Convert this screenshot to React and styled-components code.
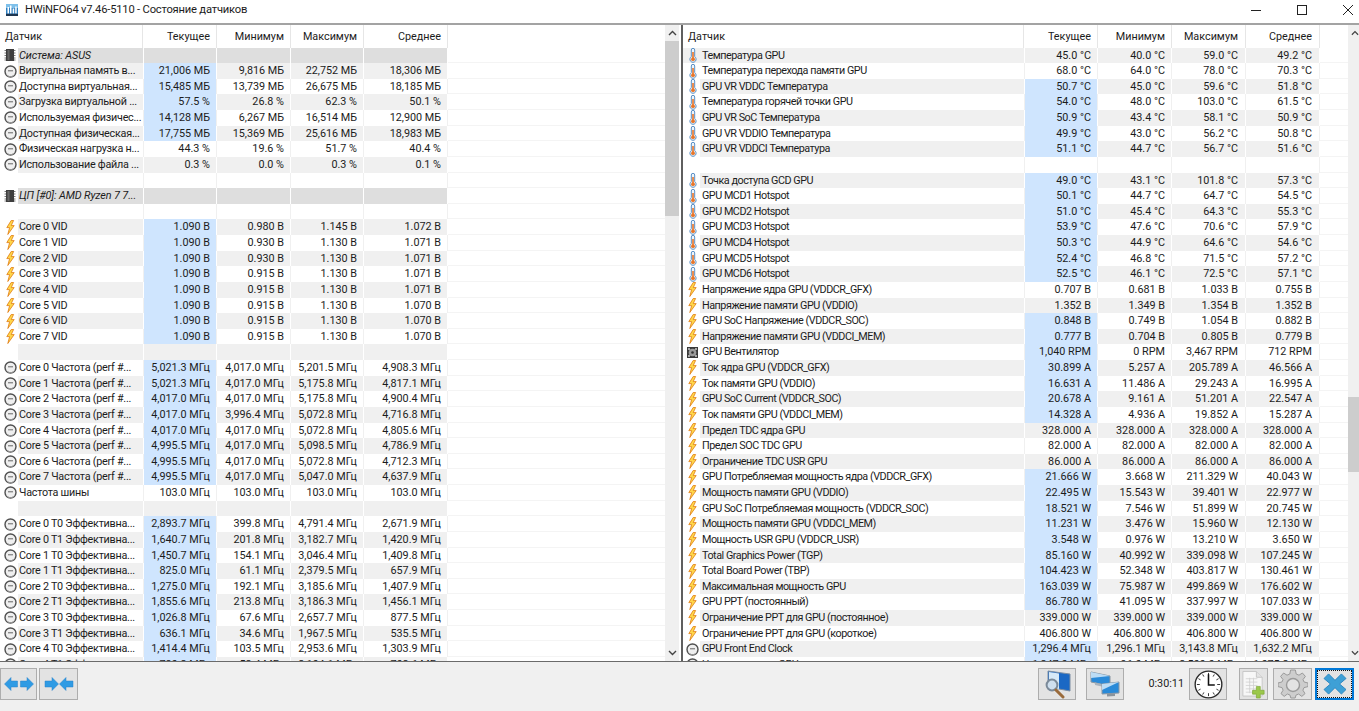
import React from 'react';
import styled, { createGlobalStyle } from 'styled-components';

const GlobalStyle = createGlobalStyle`
  html, body { margin: 0; padding: 0; background: #fff; overflow: hidden; }
  body { font-family: Roboto, "Liberation Sans", sans-serif; font-size: 10.8px; color: #1c1c1c; }
`;

const Window = styled.div`
  width: 1359px;
  height: 711px;
  display: flex;
  flex-direction: column;
  overflow: hidden;
`;

const TitleBar = styled.div`
  height: 19px;
  flex: none;
  display: flex;
  align-items: center;
  padding: 0 0 4px 6px;
  margin-right: -12px;
  font-size: 11.2px;
  letter-spacing: -0.2px;
  border-bottom: 2px solid #a3a3a3;
`;

const TitleText = styled.span`
  flex: 1;
  white-space: nowrap;
  margin-left: 7px;
`;

const WinButton = styled.div`
  width: 46px;
  height: 19px;
  display: flex;
  align-items: center;
  justify-content: center;
`;

const Panes = styled.div`
  flex: 1;
  min-height: 0;
  display: flex;
  border-bottom: 1px solid #6b6b6b;
`;

const Pane = styled.div`
  display: flex;
  min-width: 0;
  overflow: hidden;
  width: ${p => p.$width}px;
`;

const Splitter = styled.div`
  width: 2px;
  margin-left: 2px;
  flex: none;
  background: #5f5f5f;
`;

const Table = styled.div`
  flex: 1;
  min-width: 0;
  overflow: hidden;
`;

const Row = styled.div`
  display: flex;
  height: ${p => (p.$header ? '22.6px' : '15.63px')};
  align-items: stretch;
  white-space: nowrap;
  line-height: ${p => (p.$header ? '23px' : '16.4px')};
`;

const IconSlot = styled.div`
  flex: none;
  width: ${p => p.$w}px;
  box-sizing: border-box;
  padding-left: 2px;
  display: flex;
  align-items: center;
  justify-content: center;
  background: ${p => (p.$bg ? p.$bg : '#fff')};
`;

const rowBg = p => (p.$section ? '#dedede' : p.$odd ? '#f0f0f0' : '#fff');

const NameCell = styled.div`
  flex: none;
  width: ${p => p.$w}px;
  background: ${rowBg};
  overflow: hidden;
  padding-left: ${p => p.$indent}px;
  box-sizing: border-box;
  font-style: ${p => (p.$section ? 'italic' : 'normal')};
  letter-spacing: ${p => (p.$section ? '-0.1px' : `${p.$tight}px`)};
  border-right: 1px solid ${p => (p.$odd || p.$section ? '#fff' : '#f0f0f0')};
`;

const ValueCell = styled.div`
  flex: none;
  width: ${p => p.$w}px;
  box-sizing: border-box;
  text-align: right;
  padding-right: ${p => p.$pad}px;
  background: ${p => (p.$hot ? '#cfe5fe' : rowBg(p))};
  border-right: 1px solid ${p => (p.$odd || p.$section ? '#fff' : '#f0f0f0')};
`;

const HeaderCell = styled.div`
  flex: none;
  width: ${p => p.$w}px;
  box-sizing: border-box;
  text-align: ${p => (p.$left ? 'left' : 'right')};
  padding: ${p => (p.$left ? '0 0 0 5px' : `0 ${p.$pad}px 0 0`)};
  border-right: 1px solid #e6e6e6;
`;

const Filler = styled.div`
  flex: 1;
  border-bottom: 1px solid ${p => (p.$clean ? 'transparent' : '#f4f4f4')};
`;

const Scrollbar = styled.div`
  flex: none;
  width: ${p => p.$w}px;
  background: #f0f0f0;
  display: flex;
  flex-direction: column;
  align-items: stretch;
`;

const ScrollArrow = styled.div`
  height: 16px;
  flex: none;
  display: flex;
  align-items: center;
  justify-content: center;
  padding-left: ${p => p.$shift || 0}px;
`;

const ScrollSpace = styled.div`
  flex: 1;
  display: flex;
  flex-direction: column;
`;

const ScrollGap = styled.div`
  height: ${p => p.$h}px;
  flex: none;
`;

const ScrollThumb = styled.div`
  height: ${p => p.$h}px;
  flex: none;
  background: #cdcdcd;
`;

const BottomBar = styled.div`
  height: 49px;
  flex: none;
  background: #f0f0f0;
  display: flex;
  padding: 6px 5px 0 0;
  box-sizing: border-box;
  align-items: flex-start;
`;

const ToolButton = styled.div`
  width: ${p => p.$w}px;
  height: 32px;
  margin-left: ${p => p.$ml || 0}px;
  flex: none;
  box-sizing: border-box;
  background: #e3e3e3;
  border: ${p => (p.$active ? '2px solid #0078d7' : '1px solid #adadad')};
  display: flex;
  align-items: center;
  justify-content: center;
  position: relative;
`;

const FocusRing = styled.div`
  position: absolute;
  inset: 0;
  border: 1px dotted #111;
`;

const Spacer = styled.div`
  flex: 1;
`;

const Timer = styled.div`
  margin-left: 24px;
  margin-right: 5px;
  height: 32px;
  line-height: 32px;
  flex: none;
`;

const AppIcon = () => (
  <svg width="12" height="12" viewBox="0 0 12 12">
    <rect width="12" height="12" fill="#2f7fc0" />
    <rect width="12" height="4" fill="#7fc0ea" />
    <rect x="1.5" y="3" width="1.5" height="6.5" fill="#fff" />
    <rect x="4" y="1.5" width="1.5" height="8" fill="#fff" />
    <rect x="6.7" y="4.5" width="1.5" height="5" fill="#fff" />
    <rect x="9.2" y="2.5" width="1.5" height="7" fill="#fff" />
    <rect y="9.8" width="12" height="2.2" fill="#1d3550" />
  </svg>
);

const GaugeIcon = () => (
  <svg width="13" height="13" viewBox="0 0 13 13">
    <circle cx="6.5" cy="6.5" r="5.5" fill="#efefef" stroke="#4f4f4f" strokeWidth="1.4" />
    <path d="M4 5.8H9" stroke="#666" strokeWidth="1" />
    <path d="M2.2 9.2a5 5 0 0 0 8.6 0" stroke="#a3a3a3" strokeWidth="1" fill="none" />
  </svg>
);

const ChipIcon = () => (
  <svg width="12" height="14" viewBox="0 0 12 14">
    <rect x="2" y="1" width="8" height="12" fill="#3e3e3e" />
    <path d="M0.5 2.5H2M0.5 5H2M0.5 7.5H2M0.5 10H2M0.5 12H2M10 2.5h1.5M10 5h1.5M10 7.5h1.5M10 10h1.5M10 12h1.5" stroke="#777" strokeWidth="1" />
    <rect x="3.5" y="2" width="2" height="10" fill="#666" />
  </svg>
);

const BoltIcon = () => (
  <svg width="9" height="15" viewBox="0 0 9 15">
    <path d="M5.2 0.5L0.8 7.6H3.6L1.8 14.5L8.2 5.6H5.2L7.6 0.5Z" fill="#ffd84a" stroke="#e07a10" strokeWidth="0.8" strokeLinejoin="round" />
  </svg>
);

const ThermoIcon = () => (
  <svg width="8" height="15" viewBox="0 0 8 15">
    <path d="M2.3 2a1.7 1.7 0 0 1 3.4 0V8.6a3.1 3.1 0 1 1-3.4 0Z" fill="#eef5fb" stroke="#5a8fc4" strokeWidth="1" />
    <rect x="3.2" y="4" width="1.6" height="6" fill="#e8762a" />
    <circle cx="4" cy="11.2" r="1.9" fill="#e8762a" />
  </svg>
);

const FanIcon = () => (
  <svg width="11" height="11" viewBox="0 0 11 11">
    <rect width="11" height="11" fill="#3a3a3a" />
    <circle cx="5.5" cy="5.5" r="3.8" fill="#9b9b9b" />
    <circle cx="2" cy="2" r="1" fill="#ccc" />
    <circle cx="9" cy="2" r="1" fill="#ccc" />
    <circle cx="2" cy="9" r="1" fill="#ccc" />
    <circle cx="9" cy="9" r="1" fill="#ccc" />
    <circle cx="5.5" cy="5.5" r="1.3" fill="#333" />
  </svg>
);

const ICONS = { g: GaugeIcon, c: ChipIcon, b: BoltIcon, t: ThermoIcon, f: FanIcon };

const ArrowPair = ({ inward }) => (
  <svg width="30" height="14" viewBox="0 0 30 14">
    {inward ? (
      <g fill="#2f9be4" stroke="#2a83c8" strokeWidth="0.5">
        <path d="M1 4H8V0.5L14.5 7L8 13.5V10H1Z" />
        <path d="M29 4H22V0.5L15.5 7L22 13.5V10H29Z" />
      </g>
    ) : (
      <g fill="#2f9be4" stroke="#2a83c8" strokeWidth="0.5">
        <path d="M13.5 4H7V0.5L0.5 7L7 13.5V10H13.5Z" />
        <path d="M16.5 4H23V0.5L29.5 7L23 13.5V10H16.5Z" />
      </g>
    )}
  </svg>
);

const MonitorSearchIcon = () => (
  <svg width="28" height="29" viewBox="0 0 28 29">
    <path d="M5 1L27 4V21L5 17Z" fill="#1b68c4" stroke="#7c8ea3" />
    <path d="M6 2L16 3.4V19L6 16.4Z" fill="#d6e9f8" />
    <circle cx="9" cy="15" r="5.4" fill="#cfdfee" stroke="#7b8a99" strokeWidth="2" />
    <path d="M13 20L20 27" stroke="#9a6b3c" strokeWidth="3" strokeLinecap="round" />
  </svg>
);

const MonitorsIcon = () => (
  <svg width="30" height="26" viewBox="0 0 30 26">
    <path d="M1 1L20 5V15L1 11Z" fill="#2a8ad8" stroke="#8b97a3" />
    <path d="M1 1L20 5L1 7Z" fill="#bcdcf5" />
    <path d="M5 11.5L14 13.5V16L5 14Z" fill="#a9b3bd" />
    <path d="M12 13L29 11V22L12 23Z" fill="#2a8ad8" stroke="#8b97a3" />
    <path d="M12 13L29 11L12 19Z" fill="#bcdcf5" />
    <path d="M17 23L25 22.5V25L17 25.5Z" fill="#8b949c" />
  </svg>
);

const ClockIcon = () => (
  <svg width="29" height="29" viewBox="0 0 30 30">
    <circle cx="15" cy="15" r="13.8" fill="#fff" stroke="#2a2a2a" strokeWidth="1.4" />
    <path d="M15 3V6M15 24V27M3 15H6M24 15H27M9 4.6L10.2 6.8M21 4.6L19.8 6.8M9 25.4L10.2 23.2M21 25.4L19.8 23.2M4.6 9L6.8 10.2M4.6 21L6.8 19.8M25.4 9L23.2 10.2M25.4 21L23.2 19.8" stroke="#333" strokeWidth="1" />
    <path d="M15 4.5V15.6H21.5" stroke="#111" strokeWidth="1.6" fill="none" />
  </svg>
);

const DocPlusIcon = () => (
  <svg width="27" height="29" viewBox="0 0 28 30">
    <path d="M3 1.5H17L23 7.5V27H3Z" fill="#f7f7f7" stroke="#c7c7c7" />
    <path d="M17 1.5V7.5H23" fill="#e3e3e3" stroke="#c7c7c7" />
    <path d="M6 9H18M6 12.5H18M6 16H18M6 19.5H18M6 23H14M10 8V24M14 8V24" stroke="#cfcfcf" strokeWidth="0.8" />
    <path d="M17 17H21V21H25V25H21V29H17V25H13V21H17Z" fill="#9bc84b" stroke="#7da535" strokeWidth="0.7" />
  </svg>
);

const GearIcon = () => (
  <svg width="30" height="30" viewBox="0 0 30 30">
    <path
      d="M12.6 2H17.4L18.2 6L21 7.2L24.4 5L27.4 8.4L25 11.6L26.1 14L30 15V18.6L26 19.6L24.9 22.2L27 25.6L23.8 28.4L20.6 26L18 27.1L17.2 30H12.8L12 27.1L9.4 26L6.2 28.4L3 25.6L5.1 22.2L4 19.6L0 18.6V15L3.9 14L5 11.6L2.6 8.4L5.6 5L9 7.2L11.8 6Z"
      fill="#cdcdcd"
      stroke="#9a9a9a"
      transform="translate(0 -1)"
    />
    <circle cx="15" cy="16" r="6.5" fill="#e3e3e3" stroke="#9a9a9a" strokeWidth="1.4" />
  </svg>
);

const CloseIcon = () => (
  <svg width="24" height="22" viewBox="0 0 26 24">
    <path d="M6 1L13 8L20 1L25 6L18 12L25 18L20 23L13 16L6 23L1 18L8 12L1 6Z" fill="#3ea0d6" stroke="#2a86bf" strokeLinejoin="round" />
  </svg>
);

// [icon, name, current, min, max, avg, hot]
const s = name => ['c', name];
const leftRows = [
  s('Система: ASUS'),
  ['g', 'Виртуальная память в...', '21,006 МБ', '9,816 МБ', '22,752 МБ', '18,306 МБ', 1],
  ['g', 'Доступна виртуальная...', '15,485 МБ', '13,739 МБ', '26,675 МБ', '18,185 МБ', 1],
  ['g', 'Загрузка виртуальной ...', '57.5 %', '26.8 %', '62.3 %', '50.1 %', 1],
  ['g', 'Используемая физичес...', '14,128 МБ', '6,267 МБ', '16,514 МБ', '12,900 МБ', 1],
  ['g', 'Доступная физическая...', '17,755 МБ', '15,369 МБ', '25,616 МБ', '18,983 МБ', 1],
  ['g', 'Физическая нагрузка н...', '44.3 %', '19.6 %', '51.7 %', '40.4 %', 0],
  ['g', 'Использование файла ...', '0.3 %', '0.0 %', '0.3 %', '0.1 %', 0],
  [],
  s('ЦП [#0]: AMD Ryzen 7 7...'),
  [],
  ['b', 'Core 0 VID', '1.090 В', '0.980 В', '1.145 В', '1.072 В', 1],
  ['b', 'Core 1 VID', '1.090 В', '0.930 В', '1.130 В', '1.071 В', 1],
  ['b', 'Core 2 VID', '1.090 В', '0.930 В', '1.130 В', '1.071 В', 1],
  ['b', 'Core 3 VID', '1.090 В', '0.915 В', '1.130 В', '1.071 В', 1],
  ['b', 'Core 4 VID', '1.090 В', '0.915 В', '1.130 В', '1.071 В', 1],
  ['b', 'Core 5 VID', '1.090 В', '0.915 В', '1.130 В', '1.070 В', 1],
  ['b', 'Core 6 VID', '1.090 В', '0.915 В', '1.130 В', '1.070 В', 1],
  ['b', 'Core 7 VID', '1.090 В', '0.915 В', '1.130 В', '1.070 В', 1],
  [],
  ['g', 'Core 0 Частота (perf #...', '5,021.3 МГц', '4,017.0 МГц', '5,201.5 МГц', '4,908.3 МГц', 1],
  ['g', 'Core 1 Частота (perf #...', '5,021.3 МГц', '4,017.0 МГц', '5,175.8 МГц', '4,817.1 МГц', 1],
  ['g', 'Core 2 Частота (perf #...', '4,017.0 МГц', '4,017.0 МГц', '5,175.8 МГц', '4,900.4 МГц', 1],
  ['g', 'Core 3 Частота (perf #...', '4,017.0 МГц', '3,996.4 МГц', '5,072.8 МГц', '4,716.8 МГц', 1],
  ['g', 'Core 4 Частота (perf #...', '4,017.0 МГц', '4,017.0 МГц', '5,072.8 МГц', '4,805.6 МГц', 1],
  ['g', 'Core 5 Частота (perf #...', '4,995.5 МГц', '4,017.0 МГц', '5,098.5 МГц', '4,786.9 МГц', 1],
  ['g', 'Core 6 Частота (perf #...', '4,995.5 МГц', '4,017.0 МГц', '5,072.8 МГц', '4,712.3 МГц', 1],
  ['g', 'Core 7 Частота (perf #...', '4,995.5 МГц', '4,017.0 МГц', '5,047.0 МГц', '4,637.9 МГц', 1],
  ['g', 'Частота шины', '103.0 МГц', '103.0 МГц', '103.0 МГц', '103.0 МГц', 0],
  [],
  ['g', 'Core 0 T0 Эффективна...', '2,893.7 МГц', '399.8 МГц', '4,791.4 МГц', '2,671.9 МГц', 1],
  ['g', 'Core 0 T1 Эффективна...', '1,640.7 МГц', '201.8 МГц', '3,182.7 МГц', '1,420.9 МГц', 1],
  ['g', 'Core 1 T0 Эффективна...', '1,450.7 МГц', '154.1 МГц', '3,046.4 МГц', '1,409.8 МГц', 1],
  ['g', 'Core 1 T1 Эффективна...', '825.0 МГц', '61.1 МГц', '2,379.5 МГц', '657.9 МГц', 1],
  ['g', 'Core 2 T0 Эффективна...', '1,275.0 МГц', '192.1 МГц', '3,185.6 МГц', '1,407.9 МГц', 1],
  ['g', 'Core 2 T1 Эффективна...', '1,855.6 МГц', '213.8 МГц', '3,186.3 МГц', '1,456.1 МГц', 1],
  ['g', 'Core 3 T0 Эффективна...', '1,026.8 МГц', '67.6 МГц', '2,657.7 МГц', '877.5 МГц', 1],
  ['g', 'Core 3 T1 Эффективна...', '636.1 МГц', '34.6 МГц', '1,967.5 МГц', '535.5 МГц', 1],
  ['g', 'Core 4 T0 Эффективна...', '1,414.4 МГц', '103.5 МГц', '2,953.6 МГц', '1,303.9 МГц', 1],
  ['g', 'Core 4 T1 Эффективна...', '780.2 МГц', '52.4 МГц', '2,104.1 МГц', '702.6 МГц', 1],
];

const rightRows = [
  ['t', 'Температура GPU', '45.0 °C', '40.0 °C', '59.0 °C', '49.2 °C', 0],
  ['t', 'Температура перехода памяти GPU', '68.0 °C', '64.0 °C', '78.0 °C', '70.3 °C', 0],
  ['t', 'GPU VR VDDC Температура', '50.7 °C', '45.0 °C', '59.6 °C', '51.8 °C', 1],
  ['t', 'Температура горячей точки GPU', '54.0 °C', '48.0 °C', '103.0 °C', '61.5 °C', 1],
  ['t', 'GPU VR SoC Температура', '50.9 °C', '43.4 °C', '58.1 °C', '50.9 °C', 1],
  ['t', 'GPU VR VDDIO Температура', '49.9 °C', '43.0 °C', '56.2 °C', '50.8 °C', 1],
  ['t', 'GPU VR VDDCI Температура', '51.1 °C', '44.7 °C', '56.7 °C', '51.6 °C', 1],
  [],
  ['t', 'Точка доступа GCD GPU', '49.0 °C', '43.1 °C', '101.8 °C', '57.3 °C', 1],
  ['t', 'GPU MCD1 Hotspot', '50.1 °C', '44.7 °C', '64.7 °C', '54.5 °C', 1],
  ['t', 'GPU MCD2 Hotspot', '51.0 °C', '45.4 °C', '64.3 °C', '55.3 °C', 1],
  ['t', 'GPU MCD3 Hotspot', '53.9 °C', '47.6 °C', '70.6 °C', '57.9 °C', 1],
  ['t', 'GPU MCD4 Hotspot', '50.3 °C', '44.9 °C', '64.6 °C', '54.6 °C', 1],
  ['t', 'GPU MCD5 Hotspot', '52.4 °C', '46.8 °C', '71.5 °C', '57.2 °C', 1],
  ['t', 'GPU MCD6 Hotspot', '52.5 °C', '46.1 °C', '72.5 °C', '57.1 °C', 1],
  ['b', 'Напряжение ядра GPU (VDDCR_GFX)', '0.707 В', '0.681 В', '1.033 В', '0.755 В', 0],
  ['b', 'Напряжение памяти GPU (VDDIO)', '1.352 В', '1.349 В', '1.354 В', '1.352 В', 0],
  ['b', 'GPU SoC Напряжение (VDDCR_SOC)', '0.848 В', '0.749 В', '1.054 В', '0.882 В', 1],
  ['b', 'Напряжение памяти GPU (VDDCI_MEM)', '0.777 В', '0.704 В', '0.805 В', '0.779 В', 1],
  ['f', 'GPU Вентилятор', '1,040 RPM', '0 RPM', '3,467 RPM', '712 RPM', 1],
  ['b', 'Ток ядра GPU (VDDCR_GFX)', '30.899 A', '5.257 A', '205.789 A', '46.566 A', 1],
  ['b', 'Ток памяти GPU (VDDIO)', '16.631 A', '11.486 A', '29.243 A', '16.995 A', 1],
  ['b', 'GPU SoC Current (VDDCR_SOC)', '20.678 A', '9.161 A', '51.201 A', '22.547 A', 1],
  ['b', 'Ток памяти GPU (VDDCI_MEM)', '14.328 A', '4.936 A', '19.852 A', '15.287 A', 1],
  ['b', 'Предел TDC ядра GPU', '328.000 A', '328.000 A', '328.000 A', '328.000 A', 0],
  ['b', 'Предел SOC TDC GPU', '82.000 A', '82.000 A', '82.000 A', '82.000 A', 0],
  ['b', 'Ограничение TDC USR GPU', '86.000 A', '86.000 A', '86.000 A', '86.000 A', 0],
  ['b', 'GPU Потребляемая мощность ядра (VDDCR_GFX)', '21.666 W', '3.668 W', '211.329 W', '40.043 W', 1],
  ['b', 'Мощность памяти GPU (VDDIO)', '22.495 W', '15.543 W', '39.401 W', '22.977 W', 1],
  ['b', 'GPU SoC Потребляемая мощность (VDDCR_SOC)', '18.521 W', '7.546 W', '51.899 W', '20.745 W', 1],
  ['b', 'Мощность памяти GPU (VDDCI_MEM)', '11.231 W', '3.476 W', '15.960 W', '12.130 W', 1],
  ['b', 'Мощность USR GPU (VDDCR_USR)', '3.548 W', '0.976 W', '13.210 W', '3.650 W', 1],
  ['b', 'Total Graphics Power (TGP)', '85.160 W', '40.992 W', '339.098 W', '107.245 W', 1],
  ['b', 'Total Board Power (TBP)', '104.423 W', '52.348 W', '403.817 W', '130.461 W', 1],
  ['b', 'Максимальная мощность GPU', '163.039 W', '75.987 W', '499.869 W', '176.602 W', 1],
  ['b', 'GPU PPT (постоянный)', '86.780 W', '41.095 W', '337.997 W', '107.033 W', 1],
  ['b', 'Ограничение PPT для GPU (постоянное)', '339.000 W', '339.000 W', '339.000 W', '339.000 W', 0],
  ['b', 'Ограничение PPT для GPU (короткое)', '406.800 W', '406.800 W', '406.800 W', '406.800 W', 0],
  ['g', 'GPU Front End Clock', '1,296.4 МГц', '1,296.1 МГц', '3,143.8 МГц', '1,632.2 МГц', 1],
  ['g', 'Частота памяти GPU', '1,247.0 МГц', '96.0 МГц', '2,500.0 МГц', '1,075.2 МГц', 1],
];

const SensorTable = ({ rows, cols, oddStart, slot, pad, firstFull, indent, tight }) => (
  <Table>
    <Row $header>
      <HeaderCell $left $w={cols[0] - 1}>Датчик</HeaderCell>
      {['Текущее', 'Минимум', 'Максимум', 'Среднее'].map((h, i) => (
        <HeaderCell key={h} $w={cols[i + 1] + (i === 0 ? 1 : 0)} $pad={pad[i]}>{h}</HeaderCell>
      ))}
      <Filler $clean />
    </Row>
    {rows.map(([icon, name, cur, min, max, avg, hot], idx) => {
      const Icon = ICONS[icon];
      const section = icon === 'c';
      const odd = (idx + oddStart) % 2 === 1;
      return (
        <Row key={idx}>
          <IconSlot $w={slot} $bg={firstFull && idx === 0 ? '#f0f0f0' : null}>{Icon && <Icon />}</IconSlot>
          <NameCell $w={cols[0] - slot} $odd={odd} $section={section} $indent={indent} $tight={tight}>{name}</NameCell>
          <ValueCell $w={cols[1]} $pad={pad[0]} $odd={odd} $section={section} $hot={hot}>{cur}</ValueCell>
          <ValueCell $w={cols[2]} $pad={pad[1]} $odd={odd} $section={section}>{min}</ValueCell>
          <ValueCell $w={cols[3]} $pad={pad[2]} $odd={odd} $section={section}>{max}</ValueCell>
          <ValueCell $w={cols[4]} $pad={pad[3]} $odd={odd} $section={section}>{avg}</ValueCell>
          <Filler />
        </Row>
      );
    })}
  </Table>
);

const Chevron = ({ down }) => (
  <svg width="9" height="6" viewBox="0 0 9 6">
    <path d={down ? 'M1 1L4.5 4.5L8 1' : 'M1 5L4.5 1.5L8 5'} fill="none" stroke="#444" strokeWidth="1.4" />
  </svg>
);

const App = () => (
  <Window>
    <GlobalStyle />
    <TitleBar>
      <AppIcon />
      <TitleText>HWiNFO64 v7.46-5110 - Состояние датчиков</TitleText>
      <WinButton>
        <svg width="10" height="10" viewBox="0 0 10 10"><path d="M0 5.5H10" stroke="#222" /></svg>
      </WinButton>
      <WinButton>
        <svg width="10" height="10" viewBox="0 0 10 10"><rect x="0.5" y="0.5" width="9" height="9" fill="none" stroke="#222" /></svg>
      </WinButton>
      <WinButton>
        <svg width="10" height="10" viewBox="0 0 10 10"><path d="M0 0L10 10M10 0L0 10" stroke="#222" /></svg>
      </WinButton>
    </TitleBar>
    <Panes>
      <Pane $width={679}>
        <SensorTable
          rows={leftRows}
          cols={[144, 73, 74, 73, 84]}
          oddStart={0}
          slot={18}
          pad={[6, 6, 6, 6]}
          indent={1}
          tight={-0.25}
        />
        <Scrollbar $w={14}>
          <ScrollArrow><Chevron /></ScrollArrow>
          <ScrollSpace>
            <ScrollThumb $h={175} />
          </ScrollSpace>
          <ScrollArrow><Chevron down /></ScrollArrow>
        </Scrollbar>
      </Pane>
      <Splitter />
      <Pane $width={676}>
        <SensorTable
          rows={rightRows}
          cols={[342, 73, 74, 74, 74]}
          oddStart={1}
          slot={17}
          pad={[6, 6, 7, 7]}
          indent={2}
          tight={-0.48}
          firstFull
        />
        <Scrollbar $w={11}>
          <ScrollArrow $shift={3}><Chevron /></ScrollArrow>
          <ScrollSpace>
            <ScrollGap $h={356} />
            <ScrollThumb $h={75} />
          </ScrollSpace>
          <ScrollArrow $shift={3}><Chevron down /></ScrollArrow>
        </Scrollbar>
      </Pane>
    </Panes>
    <BottomBar>
      <ToolButton $w={37}><ArrowPair /></ToolButton>
      <ToolButton $w={39} $ml={2}><ArrowPair inward /></ToolButton>
      <Spacer />
      <ToolButton $w={38}><MonitorSearchIcon /></ToolButton>
      <ToolButton $w={38} $ml={10}><MonitorsIcon /></ToolButton>
      <Timer>0:30:11</Timer>
      <ToolButton $w={38}><ClockIcon /></ToolButton>
      <ToolButton $w={29} $ml={12}><DocPlusIcon /></ToolButton>
      <ToolButton $w={39} $ml={5}><GearIcon /></ToolButton>
      <ToolButton $w={39} $ml={3} $active><FocusRing /><CloseIcon /></ToolButton>
    </BottomBar>
  </Window>
);

export default App;
